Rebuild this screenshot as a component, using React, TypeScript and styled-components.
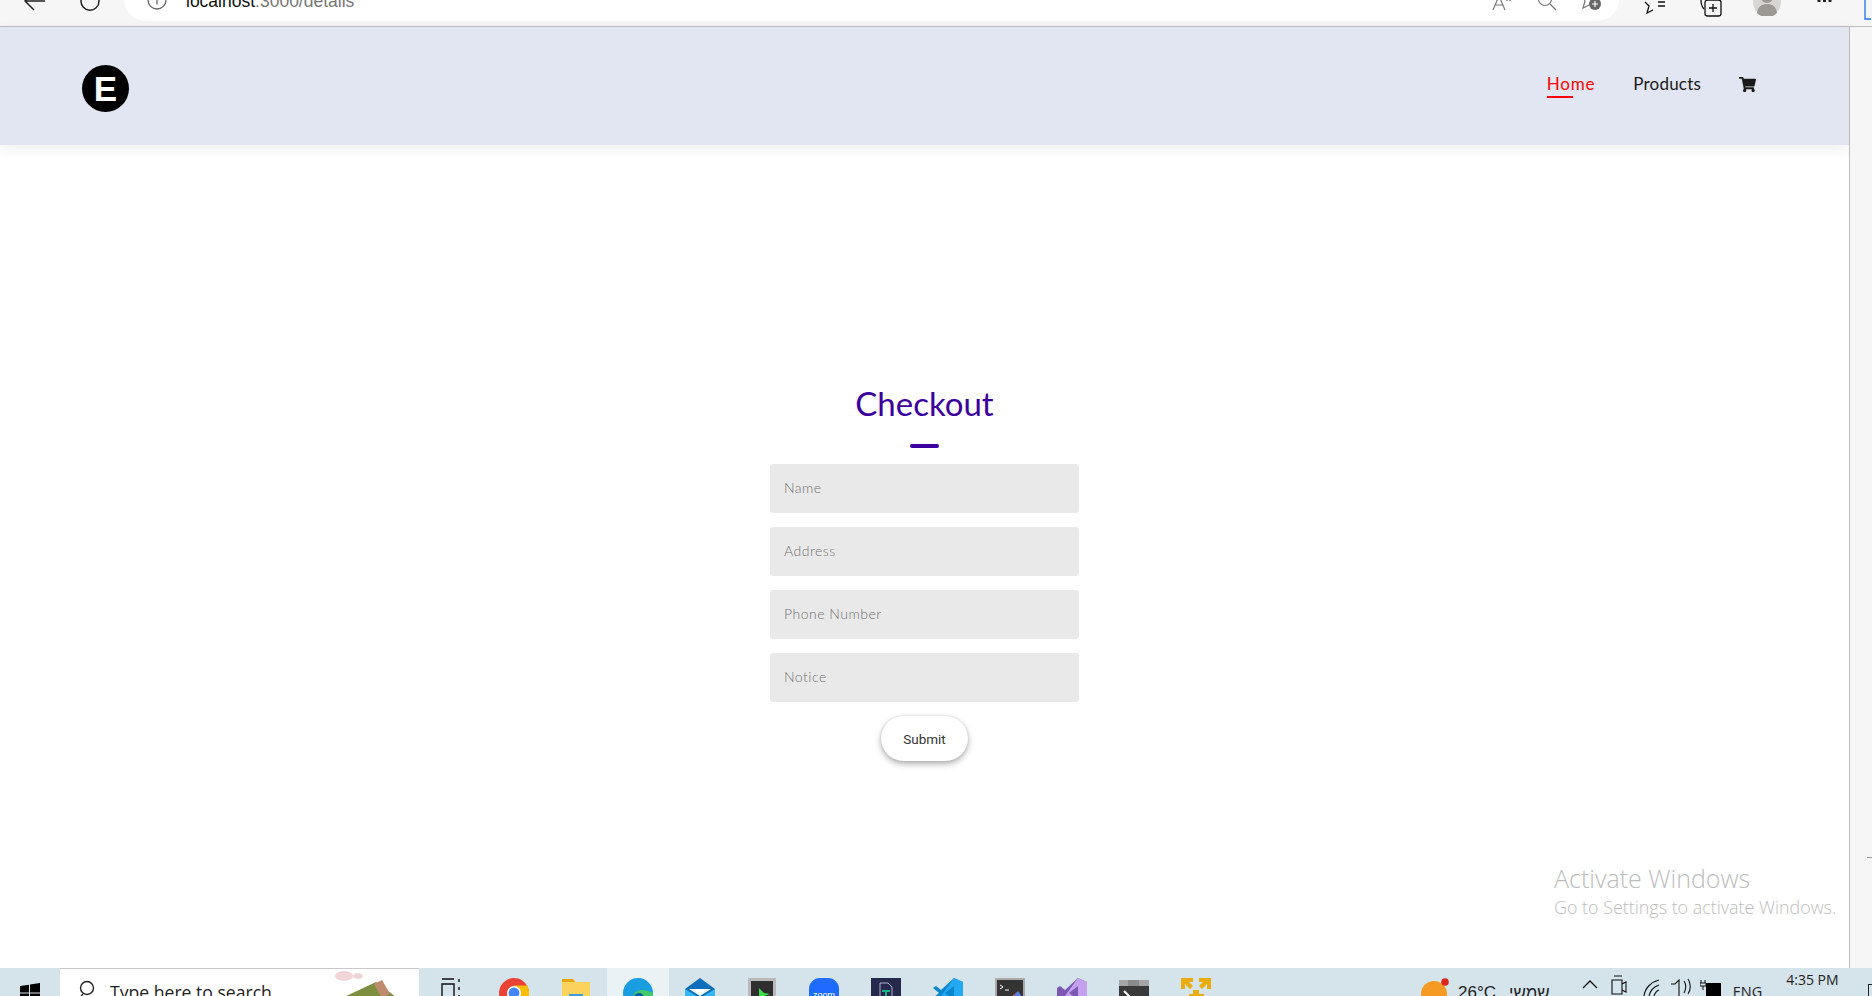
import React from 'react';
import styled, { createGlobalStyle } from 'styled-components';
import { FaShoppingCart } from 'react-icons/fa';

const GlobalStyle = createGlobalStyle`
    html, body {
        margin: 0;
        padding: 0;
        background: #fff;
        overflow: hidden;
    }
    * {
        box-sizing: border-box;
    }
`;

const Screen = styled.div`
    display: flex;
    flex-direction: column;
    width: 1872px;
    height: 996px;
    overflow: hidden;
    font-family: 'Lato', 'Liberation Sans', sans-serif;
`;

/* browser chrome, cropped by the top of the shot */
const BrowserBar = styled.div`
    display: flex;
    align-items: flex-end;
    flex: 0 0 27px;
    height: 27px;
    overflow: hidden;
    background: #f6f6f6;
    border-bottom: 1px solid #bdbdbd;
`;

const BarIcon = styled.svg<{ $left: number; $bottom: number }>`
    flex: none;
    margin-left: ${({ $left }) => $left}px;
    margin-bottom: ${({ $bottom }) => $bottom}px;
`;

const AddressPill = styled.div`
    display: flex;
    flex: none;
    align-items: flex-end;
    width: 1495px;
    height: 40px;
    margin-left: 24px;
    margin-bottom: 5px;
    padding: 0 15px 11px 23px;
    background: #fff;
    border-radius: 0 0 22px 22px;
`;

const PillRight = styled.div`
    display: flex;
    align-items: flex-end;
    margin-left: auto;
`;

const Url = styled.span`
    margin-left: 19px;
    margin-bottom: -1px;
    font-family: 'Liberation Sans', sans-serif;
    font-size: 17.5px;
    line-height: 19px;
    color: #777;
    b {
        font-weight: 400;
        color: #111;
    }
`;

const Middle = styled.div`
    display: flex;
    flex: 1;
    min-height: 0;
`;

const Page = styled.div`
    position: relative;
    display: flex;
    flex-direction: column;
    width: 1850px;
    background: #fff;
    border-right: 1px solid #bdbdbd;
`;

const SideStrip = styled.div`
    position: relative;
    flex: 1;
    background: #f6f6f6;
`;

const StripTick = styled.div`
    position: absolute;
    top: 830px;
    left: 17px;
    width: 5px;
    height: 1px;
    background: #999;
`;

const Nav = styled.header`
    display: flex;
    flex: 0 0 118px;
    align-items: center;
    justify-content: space-between;
    padding: 0 93px 0 82px;
    background: #e2e6f2;
    box-shadow: 0 4px 14px rgba(0, 0, 0, 0.07);
`;

const Logo = styled.div`
    display: flex;
    align-items: center;
    justify-content: center;
    width: 47px;
    height: 47px;
    margin-top: 5px;
    border-radius: 50%;
    background: #000;
    color: #fff;
    font-family: 'Liberation Sans', sans-serif;
    font-size: 35px;
    font-weight: 700;
    line-height: 1;
`;

const NavLinks = styled.nav`
    display: flex;
    align-items: center;
    gap: 38px;
    margin-top: -4px;
`;

const NavLink = styled.a<{ $active?: boolean }>`
    position: relative;
    font-size: 17px;
    line-height: 22px;
    letter-spacing: ${({ $active }) => ($active ? 0.8 : 0.2)}px;
    color: ${({ $active }) => ($active ? '#f00' : '#1a1a1a')};
    ${({ $active }) =>
        $active
            ? `&::after {
                content: '';
                position: absolute;
                left: 0;
                bottom: -3px;
                width: 26px;
                height: 2px;
                background: #f00;
            }`
            : ''}
`;

const Main = styled.main`
    display: flex;
    flex: 1;
    flex-direction: column;
    align-items: center;
    padding-top: 238px;
`;

const Title = styled.h1`
    margin: 0;
    font-size: 33px;
    font-weight: 400;
    line-height: 40px;
    color: #3c009e;
`;

const TitleRule = styled.div`
    width: 29px;
    height: 4px;
    margin: 21px 0 16px;
    border-radius: 2px;
    background: #3c009e;
`;

const Form = styled.form`
    display: flex;
    flex-direction: column;
    align-items: center;
    gap: 14px;
`;

const Field = styled.input`
    display: block;
    width: 309px;
    height: 49px;
    padding: 0 14px 2px;
    border: 0;
    border-radius: 3px;
    outline: 0;
    background: #e9e9e9;
    font-family: inherit;
    font-size: 14px;
    font-weight: 300;
    letter-spacing: 0.5px;
    &::placeholder {
        color: #707070;
        opacity: 1;
    }
`;

const Submit = styled.button`
    width: 87px;
    height: 45px;
    border: 0;
    border-radius: 23px;
    background: #fff;
    color: #333;
    font-family: 'Roboto', sans-serif;
    font-size: 13.5px;
    box-shadow: 0 3px 6px rgba(0, 0, 0, 0.3), 0 0 3px rgba(0, 0, 0, 0.12);
`;

const Watermark = styled.div`
    position: absolute;
    left: 1554px;
    top: 835px;
    font-family: 'Open Sans', sans-serif;
    font-weight: 300;
    color: #bdbdbd;
`;

const WatermarkTitle = styled.div`
    font-size: 25px;
    line-height: 32px;
`;

const WatermarkText = styled.div`
    font-size: 17.9px;
    line-height: 24px;
    margin-top: 1px;
`;

/* windows taskbar, cropped by the bottom of the shot */
const Taskbar = styled.footer`
    display: flex;
    flex: 0 0 28px;
    height: 28px;
    overflow: hidden;
    background: #d5e3ea;
`;

const StartSlot = styled.div`
    flex: 0 0 60px;
    padding: 15px 0 0 20px;
`;

const SearchBox = styled.div`
    display: flex;
    flex: 0 0 359px;
    height: 40px;
    padding: 11px 0 0 18px;
    background: #fff;
    border-top: 1px solid #c9c9c9;
`;

const SearchText = styled.span`
    margin-left: 14px;
    font-family: 'Open Sans', sans-serif;
    font-size: 17.6px;
    line-height: 24px;
    color: #222;
`;

const SearchArt = styled.svg`
    flex: none;
    margin: -10px 0 0 60px;
`;

const TaskSlot = styled.div<{ $active?: boolean; $wide?: boolean }>`
    display: flex;
    flex: 0 0 ${({ $wide }) => ($wide ? 64 : 62)}px;
    justify-content: center;
    padding-top: 10px;
    background: ${({ $active }) => ($active ? '#eaf2f5' : 'transparent')};
`;

const Tray = styled.div`
    position: relative;
    display: flex;
    flex: 1;
    align-items: flex-start;
    padding-left: 193px;
    color: #222;
    font-family: 'Open Sans', 'Liberation Sans', sans-serif;
`;

const TrayIcon = styled.svg<{ $left: number; $top?: number }>`
    flex: none;
    margin-left: ${({ $left }) => $left}px;
    margin-top: ${({ $top }) => $top ?? 14}px;
`;

const Weather = styled.span<{ $left: number }>`
    margin-left: ${({ $left }) => $left}px;
    padding-top: 14px;
    font-family: 'Liberation Sans', sans-serif;
    font-size: 17px;
    line-height: 22px;
    white-space: nowrap;
`;

const Lang = styled.span`
    margin-left: 11px;
    padding-top: 14px;
    font-size: 14.5px;
    line-height: 20px;
`;

const Clock = styled.div`
    margin-left: 24px;
    padding-top: 2px;
    font-size: 14px;
    line-height: 20px;
    white-space: nowrap;
`;

const ShowDesktop = styled.div`
    position: absolute;
    right: 0;
    top: 16px;
    width: 4px;
    height: 14px;
    border: 1px solid #222;
    border-right: 0;
`;

const ChromeIcon = () => (
    <svg width="30" height="30" viewBox="0 0 30 30">
        <circle cx="15" cy="15" r="15" fill="#ea4335" />
        <path d="M15 15 2 22.5A15 15 0 0 0 15 30z" fill="#34a853" />
        <path d="M15 15 15 30A15 15 0 0 0 28 7.5H15z" fill="#fbbc05" />
        <circle cx="15" cy="15" r="7" fill="#fff" />
        <circle cx="15" cy="15" r="5.4" fill="#4285f4" />
    </svg>
);

const FolderIcon = () => (
    <svg width="28" height="26" viewBox="0 0 28 26">
        <path d="M0 1h11l3 3h14v22H0z" fill="#fbd35c" />
        <path d="M0 1h11l2 3H0z" fill="#e5a50f" />
        <rect x="7" y="16" width="14" height="10" fill="#3f9bdc" />
    </svg>
);

const EdgeIcon = () => (
    <svg width="30" height="30" viewBox="0 0 30 30">
        <circle cx="15" cy="15" r="15" fill="#1b9de2" />
        <path d="M30 15A15 15 0 0 1 8 28c8 1 14-3 14-9-4-5-10-2-10 3-5-8 6-14 18-7z" fill="#41c96a" />
        <circle cx="16" cy="20" r="5" fill="#0c59a4" />
    </svg>
);

const MailIcon = () => (
    <svg width="30" height="30" viewBox="0 0 30 30">
        <path d="M15 0 30 11v19H0V11z" fill="#0a6ebd" />
        <path d="M0 11 15 20 30 11v19H0z" fill="#35b8f1" />
        <path d="M4 11h22l-11 7z" fill="#fff" />
    </svg>
);

const GreenTerminalIcon = () => (
    <svg width="28" height="30" viewBox="0 0 28 30">
        <rect width="28" height="30" fill="#b9b9b9" />
        <rect x="3" y="3" width="22" height="27" fill="#2f2f2f" />
        <path d="M11 10v10l11-4-6-1z" fill="#3ddc4b" />
    </svg>
);

const ZoomIcon = () => (
    <svg width="30" height="30" viewBox="0 0 30 30">
        <rect width="30" height="30" rx="11" fill="#1f6bff" />
        <text x="15" y="20" fontSize="9" fill="#fff" textAnchor="middle" fontFamily="Liberation Sans">
            zoom
        </text>
    </svg>
);

const DarkFileIcon = () => (
    <svg width="30" height="30" viewBox="0 0 30 30">
        <rect width="30" height="30" fill="#26284d" />
        <path d="M9 5h8l4 4v21H9z" fill="none" stroke="#aeb3c9" />
        <path d="M11 12h8v2h-3v10h-2V14h-3z" fill="#18b383" />
    </svg>
);

const VsCodeIcon = () => (
    <svg width="30" height="30" viewBox="0 0 30 30">
        <path d="M21 0 30 4v22l-9 4L8 18l-5 4-3-2 6-5-6-5 3-2 5 4z" fill="#0a85cf" />
        <path d="M21 0 30 4v22l-9 4V8l-9 7 9 7V30L8 18" fill="#23a8f2" />
    </svg>
);

const CmdToolIcon = () => (
    <svg width="30" height="30" viewBox="0 0 30 30">
        <rect width="30" height="30" fill="#a9a9a9" />
        <rect x="2" y="2" width="26" height="28" fill="#343434" />
        <path d="M5 7l3 2-3 2M10 12h4" stroke="#fff" fill="none" />
        <path d="M10 24l12-10 4 4-4 8z" fill="#e04545" />
        <path d="M15 22l8-9 3 4-4 7z" fill="#4b7fe0" />
    </svg>
);

const VisualStudioIcon = () => (
    <svg width="30" height="30" viewBox="0 0 30 30">
        <path d="M21 0 30 4v22l-9 4L8 18l-5 4-3-2V10l3-2 5 4z" fill="#7d58b3" />
        <path d="M21 0 30 4v22l-9 4V8l-9 7 9 7V30L8 18" fill="#c4a1ee" />
    </svg>
);

const ConsoleIcon = () => (
    <svg width="30" height="30" viewBox="0 0 30 30">
        <rect y="2" width="30" height="28" rx="2" fill="#3a3a3a" />
        <rect y="2" width="30" height="6" fill="#a5a5a5" />
        <rect x="9" y="2" width="11" height="6" fill="#8b8b8b" />
        <path d="M5 13l6 6-6 6" stroke="#fff" strokeWidth="2" fill="none" />
    </svg>
);

const NetworkIcon = () => (
    <svg width="30" height="30" viewBox="0 0 30 30">
        <path
            d="M0 0h12v4H8l4 4-3 3-5-5v5H0zM18 0h12v11h-4V6l-5 5-3-3 4-4h-4zM12 12h6v4h5v4h-5v5h-6v-5H8v-4h4z"
            fill="#e8ac0e"
        />
    </svg>
);

const App: React.FC = () => {
    return (
        <Screen>
            <GlobalStyle />
            <BrowserBar>
                <BarIcon $left={24} $bottom={15} width="22" height="20" viewBox="0 0 22 20">
                    <path d="M10 1 1 10l9 9M1 10h20" fill="none" stroke="#222" strokeWidth="1.5" />
                </BarIcon>
                <BarIcon $left={34} $bottom={15} width="20" height="20" viewBox="0 0 20 20">
                    <path d="M16.5 4A9 9 0 1 1 4 3.5" fill="none" stroke="#222" strokeWidth="1.5" />
                </BarIcon>
                <AddressPill>
                    <BarIcon $left={0} $bottom={0} width="20" height="20" viewBox="0 0 20 20">
                        <circle cx="10" cy="10" r="9" fill="none" stroke="#666" strokeWidth="1.3" />
                        <path d="M10 8.5v6" stroke="#666" strokeWidth="1.3" />
                    </BarIcon>
                    <Url>
                        <b>localhost</b>:3000/details
                    </Url>
                    <PillRight>
                        <BarIcon $left={0} $bottom={-1} width="20" height="16" viewBox="0 0 20 16">
                            <path d="M1 15 7 1l6 14M3.5 10h7M15 3v3M18 3v3" fill="none" stroke="#777" strokeWidth="1.2" />
                        </BarIcon>
                        <BarIcon $left={25} $bottom={-1} width="20" height="16" viewBox="0 0 20 16">
                            <circle cx="8" cy="4" r="6.5" fill="none" stroke="#777" strokeWidth="1.2" />
                            <path d="M13 9l6 6" stroke="#777" strokeWidth="1.2" />
                        </BarIcon>
                        <BarIcon $left={23} $bottom={-1} width="24" height="16" viewBox="0 0 24 16">
                            <path d="M2 1l3 5-2 7 6-3" fill="none" stroke="#777" strokeWidth="1.2" />
                            <circle cx="15" cy="9" r="6" fill="#666" />
                            <path d="M12 9h6M15 6v6" stroke="#fff" strokeWidth="1.2" />
                        </BarIcon>
                    </PillRight>
                </AddressPill>
                <BarIcon $left={25} $bottom={11} width="24" height="16" viewBox="0 0 24 16">
                    <path d="M1 3l4 4-2 7 6-3" fill="none" stroke="#111" strokeWidth="1.3" />
                    <path d="M14 3h7M14 7h7" stroke="#111" strokeWidth="1.3" />
                </BarIcon>
                <BarIcon $left={32} $bottom={9} width="22" height="18" viewBox="0 0 22 18">
                    <rect x="5" y="1" width="16" height="16" rx="2.5" fill="none" stroke="#111" strokeWidth="1.3" />
                    <path d="M13 5v8M9 9h8M1 1c0 4 1 7 3 9" fill="none" stroke="#111" strokeWidth="1.3" />
                </BarIcon>
                <BarIcon $left={31} $bottom={10} width="28" height="28" viewBox="0 0 28 28">
                    <circle cx="14" cy="14" r="14" fill="#d8d6d2" />
                    <circle cx="14" cy="9" r="6" fill="#9c9894" />
                    <path d="M4 25c1-7 5-9 10-9s9 2 10 9a14 14 0 0 1-20 0z" fill="#9c9894" />
                </BarIcon>
                <BarIcon $left={35} $bottom={24} width="17" height="3" viewBox="0 0 17 3">
                    <path d="M1.5 0h3v3h-3zM7 0h3v3H7zM12.500 0h3v3h-3z" fill="#222" />
                </BarIcon>
                <BarIcon $left={31} $bottom={5} width="7" height="22" viewBox="0 0 7 22">
                    <path d="M1 0v20h6" fill="none" stroke="#1a73e8" strokeWidth="1.3" />
                </BarIcon>
            </BrowserBar>

            <Middle>
                <Page>
                    <Nav>
                        <Logo>E</Logo>
                        <NavLinks>
                            <NavLink $active>Home</NavLink>
                            <NavLink>Products</NavLink>
                            <FaShoppingCart size={17} color="#1a1a1a" />
                        </NavLinks>
                    </Nav>
                    <Main>
                        <Title>Checkout</Title>
                        <TitleRule />
                        <Form>
                            <Field placeholder="Name" />
                            <Field placeholder="Address" />
                            <Field placeholder="Phone Number" />
                            <Field placeholder="Notice" />
                            <Submit type="button">Submit</Submit>
                        </Form>
                    </Main>
                    <Watermark>
                        <WatermarkTitle>Activate Windows</WatermarkTitle>
                        <WatermarkText>Go to Settings to activate Windows.</WatermarkText>
                    </Watermark>
                </Page>
                <SideStrip>
                    <StripTick />
                </SideStrip>
            </Middle>

            <Taskbar>
                <StartSlot>
                    <svg width="20" height="20" viewBox="0 0 20 20">
                        <path d="M0 3l9-1.300v7.800H0zM10 1.500 20 0v9.500H10zM0 10.500h9v7.800L0 17zM10 10.500h10V20l-10-1.500z" fill="#000" />
                    </svg>
                </StartSlot>
                <SearchBox>
                    <svg width="18" height="24" viewBox="0 0 18 24">
                        <circle cx="9" cy="8" r="6.500" fill="none" stroke="#222" strokeWidth="1.400" />
                        <path d="M5 14l-4 5" stroke="#222" strokeWidth="1.400" />
                    </svg>
                    <SearchText>Type here to search</SearchText>
                    <SearchArt width="72" height="40" viewBox="0 0 72 40">
                        <ellipse cx="12" cy="6" rx="9" ry="5" fill="#f0d5d8" />
                        <ellipse cx="26" cy="6" rx="5" ry="3" fill="#f0d5d8" />
                        <path d="M10 28 44 12l24 18z" fill="#7d8f3f" />
                        <path d="M42 14l8-4 8 14-8 4z" fill="#c08a70" />
                        <ellipse cx="10" cy="30" rx="8" ry="4" fill="#cfcbe6" />
                        <ellipse cx="64" cy="30" rx="8" ry="4" fill="#cfcbe6" />
                    </SearchArt>
                </SearchBox>
                <TaskSlot $wide>
                    <svg width="22" height="24" viewBox="0 0 22 24">
                        <path d="M2 1h12M2 6v16h12V6zM19 1v3M19 9v3M19 17v3" fill="none" stroke="#111" strokeWidth="1.400" />
                    </svg>
                </TaskSlot>
                <TaskSlot><ChromeIcon /></TaskSlot>
                <TaskSlot><FolderIcon /></TaskSlot>
                <TaskSlot $active><EdgeIcon /></TaskSlot>
                <TaskSlot><MailIcon /></TaskSlot>
                <TaskSlot><GreenTerminalIcon /></TaskSlot>
                <TaskSlot><ZoomIcon /></TaskSlot>
                <TaskSlot><DarkFileIcon /></TaskSlot>
                <TaskSlot><VsCodeIcon /></TaskSlot>
                <TaskSlot><CmdToolIcon /></TaskSlot>
                <TaskSlot><VisualStudioIcon /></TaskSlot>
                <TaskSlot><ConsoleIcon /></TaskSlot>
                <TaskSlot><NetworkIcon /></TaskSlot>
                <Tray>
                    <TrayIcon $left={0} $top={9} width="34" height="30" viewBox="0 0 34 30">
                        <circle cx="14" cy="17" r="13" fill="#f59a23" />
                        <circle cx="25" cy="5" r="3.800" fill="#d9281e" />
                    </TrayIcon>
                    <Weather $left={4}>26°C</Weather>
                    <Weather $left={13}>שמשי</Weather>
                    <TrayIcon $left={31} $top={11} width="18" height="18" viewBox="0 0 18 18">
                        <path d="M2 9l7-7 7 7" fill="none" stroke="#111" strokeWidth="1.300" />
                    </TrayIcon>
                    <TrayIcon $left={12} $top={7} width="16" height="20" viewBox="0 0 16 20">
                        <path d="M3 1h8M1 5h10v14H1zM11 9l4-2v10l-4-2" fill="none" stroke="#111" strokeWidth="1.100" />
                    </TrayIcon>
                    <TrayIcon $left={16} $top={11} width="20" height="18" viewBox="0 0 20 18">
                        <path d="M1 17C2 9 8 3 16 1M6 17c1-5 4-9 10-11M11 17c1-3 2-5 5-6" fill="none" stroke="#111" strokeWidth="1.100" />
                    </TrayIcon>
                    <TrayIcon $left={7} $top={8} width="22" height="20" viewBox="0 0 22 20">
                        <path d="M1 8h4l4-4v16M14 5c2 3 2 8 0 12M18 3c3 4 3 11 0 15" fill="none" stroke="#111" strokeWidth="1.100" />
                    </TrayIcon>
                    <TrayIcon $left={8} $top={10} width="22" height="18" viewBox="0 0 22 18">
                        <path d="M1 2v3M5 2v3M0 5h6v3H0zM3 8v4" stroke="#111" fill="none" />
                        <rect x="6" y="5" width="15" height="13" fill="#000" />
                    </TrayIcon>
                    <Lang>ENG</Lang>
                    <Clock>4:35 PM</Clock>
                    <ShowDesktop />
                </Tray>
            </Taskbar>
        </Screen>
    );
};

export default App;
